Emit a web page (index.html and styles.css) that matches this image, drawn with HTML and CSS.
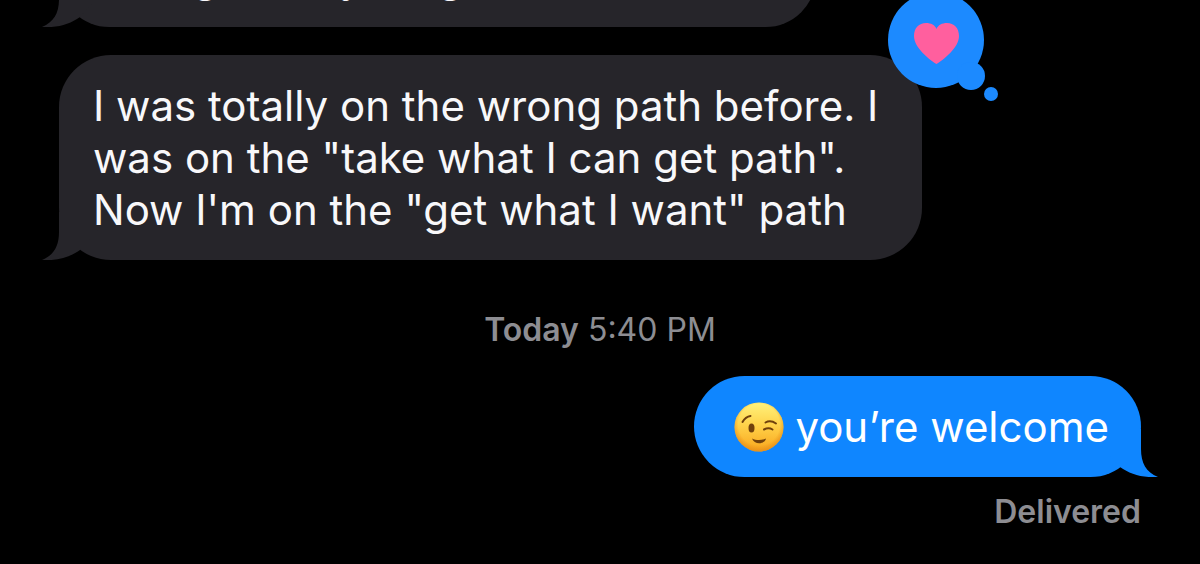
FILE: index.html
```html
<!DOCTYPE html>
<html lang="en">
<head>
<meta charset="utf-8">
<meta name="viewport" content="width=device-width, initial-scale=1">
<title>Messages</title>
<link rel="stylesheet" href="styles.css">
</head>
<body>
<main class="chat">
  <div class="bubble received previous">
    <svg class="tail" viewBox="0 0 70 60" aria-hidden="true"><path d="M17 12V32C17 46 12 55 0 60C16 61 28 57 38 50L56 30V12Z"/></svg>
    <p class="text">wrong on anything</p>
  </div>
  <div class="bubble received">
    <svg class="tail" viewBox="0 0 70 60" aria-hidden="true"><path d="M17 12V32C17 46 12 55 0 60C16 61 28 57 38 50L56 30V12Z"/></svg>
    <p class="text">I was totally on the wrong path before. I<br>was on the "take what I can get path".<br>Now I'm on the "get what I want" path</p>
    <svg class="reaction" viewBox="0 0 112 112" role="img" aria-label="Loved">
      <g class="reaction-cloud"><circle cx="48" cy="49" r="48"/><circle cx="83" cy="85" r="14"/><circle cx="103" cy="103" r="7"/></g>
      <path class="heart" d="M48.500 73C42 69 26 57 26 45C26 37 31 32 38 32C43 32 47 34 48.500 38C50 34 54 32 59 32C66 32 71 37 71 45C71 57 55 69 48.500 73Z"/>
    </svg>
  </div>
  <p class="stamp"><strong>Today</strong> 5:40 PM</p>
  <div class="bubble sent">
    <svg class="tail" viewBox="0 0 70 60" aria-hidden="true"><path d="M17 12V32C17 46 12 55 0 60C16 61 28 57 38 50L56 30V12Z"/></svg>
    <svg class="emoji" viewBox="0 0 50 50" role="img" aria-label="Winking face">
      <defs>
        <linearGradient id="face" x1="0" y1="0" x2="0" y2="1"><stop offset="0" stop-color="#fff27c"/><stop offset=".45" stop-color="#ffd34b"/><stop offset="1" stop-color="#f9a51c"/></linearGradient>
        <radialGradient id="rim" cx=".5" cy=".45" r=".54"><stop offset=".78" stop-color="#e98a12" stop-opacity="0"/><stop offset="1" stop-color="#e28a1c" stop-opacity=".7"/></radialGradient>
      </defs>
      <circle cx="25" cy="25" r="24.500" fill="url(#face)"/>
      <circle cx="25" cy="25" r="24.500" fill="url(#rim)"/>
      <ellipse cx="17.500" cy="26" rx="3" ry="4.500" fill="#70400c"/>
      <g fill="none" stroke="#70400c" stroke-width="2" stroke-linecap="round"><path d="M8.500 20C10.500 16.500 13 14.500 16.500 14"/><path d="M31.500 20.500C35 18.500 38.500 19 42 21.500"/><path d="M30 27.500C33 26 36 26 38.500 27.500"/></g>
      <path d="M18 36.500C22 38.500 28 38.500 32 36.500C31 42.500 20 43 18 36.500Z" fill="#70400c"/>
    </svg>
    <p class="text">you’re welcome</p>
  </div>
  <p class="status">Delivered</p>
</main>
</body>
</html>
```
FILE: styles.css
```css
* {
  box-sizing: border-box;
}

body {
  margin: 0;
  background: #000;
  color: #fff;
  font-family: Inter, "Noto Sans", sans-serif;
}

p {
  margin: 0;
}

.chat {
  display: flex;
  flex-direction: column;
  justify-content: flex-end;
  height: 100vh;
  padding: 0 59px 32px;
  overflow: hidden;
}

.bubble {
  position: relative;
  display: flex;
  flex-shrink: 0;
  align-items: center;
  gap: 11px;
  padding: 25px 44px 24px 34px;
  border-radius: 52px;
  font-size: 42px;
  line-height: 52px;
}

.text {
  z-index: 1;
}

.received {
  align-self: flex-start;
  background: #26252a;
  color: #f8f8fa;
}

.previous {
  width: 70%;
  margin-bottom: 28px;
}

.sent {
  align-self: flex-end;
  padding: 25px 32px 24px 40px;
  background: #0f86ff;
}

.tail {
  position: absolute;
  bottom: 0;
  left: -17px;
  width: 70px;
  height: 60px;
  fill: #26252a;
}

.sent .tail {
  right: -17px;
  left: auto;
  fill: #0f86ff;
  transform: scaleX(-1);
}

.reaction {
  position: absolute;
  top: -64px;
  right: -78px;
  width: 112px;
  height: 112px;
}

.reaction-cloud {
  fill: #1c8aff;
}

.heart {
  fill: #ff5f9e;
}

.stamp {
  margin: 50px 0 26px;
  color: #8d8d92;
  font-size: 32px;
  line-height: 40px;
  text-align: center;
}

.stamp strong {
  font-weight: 600;
}

.emoji {
  z-index: 1;
  width: 50px;
  height: 50px;
}

.status {
  margin-top: 15px;
  color: #8d8d92;
  font-size: 32px;
  font-weight: 600;
  line-height: 40px;
  text-align: right;
}
```
